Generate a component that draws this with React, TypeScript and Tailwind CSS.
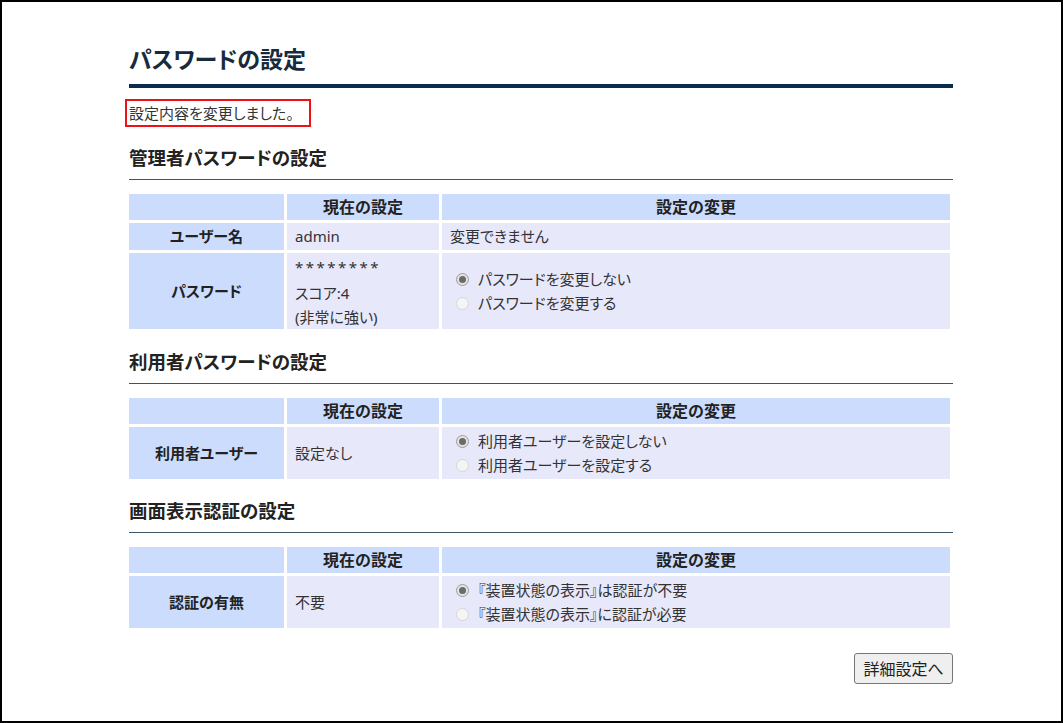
import React, { FC, ReactNode } from 'react'

const Radio: FC<{ checked?: boolean }> = ({ checked }) =>
  checked ? (
    <span className="flex h-[13px] w-[13px] shrink-0 items-center justify-center rounded-full border border-[#9c9c9c] bg-[#e4e4e4]">
      <span className="block h-[7px] w-[7px] rounded-full bg-[#6b6b6b]" />
    </span>
  ) : (
    <span className="block h-[13px] w-[13px] shrink-0 rounded-full border border-[#d6d6d6] bg-[#f5f5f5]" />
  )

const Option: FC<{ checked?: boolean; label: string }> = ({ checked, label }) => (
  <div className="flex h-[24px] items-center">
    <span className="ml-[6px] mr-[9px] flex">
      <Radio checked={checked} />
    </span>
    <span>{label}</span>
  </div>
)

const Section: FC<{ title: string; mt: string; children: ReactNode }> = ({ title, mt, children }) => (
  <section>
    <h2 className={`${mt} border-b border-[#3b5468] pb-[8px] text-[18.5px] font-bold leading-[26px] text-[#222]`}>
      {title}
    </h2>
    <div className="mt-[14px] grid w-[821px] grid-cols-[155px_152px_1fr] gap-x-[3px] gap-y-[3px] text-[15px] text-[#333]">
      <div className="bg-[#cbdcfd]" />
      <div className="bg-[#cbdcfd] text-center text-[16px] font-bold leading-[26px] text-[#222]">現在の設定</div>
      <div className="bg-[#cbdcfd] text-center text-[16px] font-bold leading-[26px] text-[#222]">設定の変更</div>
      {children}
    </div>
  </section>
)

const RowHead: FC<{ children: ReactNode }> = ({ children }) => (
  <div className="flex items-center justify-center bg-[#cbdcfd] text-[15px] font-bold text-[#222]">{children}</div>
)

const Cell: FC<{ children: ReactNode; className?: string }> = ({ children, className = '' }) => (
  <div className={`flex flex-col justify-center bg-[#e8e8fb] pl-[8px] ${className}`}>{children}</div>
)

const App: FC = () => {
  return (
    <div
      className="h-[723px] w-[1063px] overflow-hidden border-2 border-black bg-white pl-[127px] pt-[42px] [font-feature-settings:'palt']"
      style={{ fontFamily: '"Noto Sans", "Noto Sans CJK JP", sans-serif' }}
    >
      <div className="w-[824px]">
        <h1 className="text-[23px] font-bold leading-[30px] text-[#182a3d]">パスワードの設定</h1>
        <div className="mt-[10px] h-[4px] bg-[#0c2b4e]" />

        <div className="-ml-[4px] mt-[11px] h-[28px] w-[186px] border-2 border-[#f01018] pl-[2px] text-[15px] leading-[24px] text-[#333]">
          設定内容を変更しました。
        </div>

        <Section title="管理者パスワードの設定" mt="mt-[18px]">
          <RowHead>ユーザー名</RowHead>
          <Cell className="h-[27px]">admin</Cell>
          <Cell className="h-[27px]">変更できません</Cell>

          <RowHead>パスワード</RowHead>
          <Cell className="h-[76px] justify-start pt-[2px]">
            <div className="mb-[2px] leading-[24px] tracking-[2.5px]">********</div>
            <div className="leading-[24px]">スコア:4</div>
            <div className="leading-[24px]">(非常に強い)</div>
          </Cell>
          <Cell>
            <Option checked label="パスワードを変更しない" />
            <Option label="パスワードを変更する" />
          </Cell>
        </Section>

        <Section title="利用者パスワードの設定" mt="mt-[20px]">
          <RowHead>利用者ユーザー</RowHead>
          <Cell>設定なし</Cell>
          <Cell className="py-[2px]">
            <Option checked label="利用者ユーザーを設定しない" />
            <Option label="利用者ユーザーを設定する" />
          </Cell>
        </Section>

        <Section title="画面表示認証の設定" mt="mt-[19px]">
          <RowHead>認証の有無</RowHead>
          <Cell>不要</Cell>
          <Cell className="py-[2px]">
            <Option checked label="『装置状態の表示』は認証が不要" />
            <Option label="『装置状態の表示』に認証が必要" />
          </Cell>
        </Section>

        <div className="mt-[25px] flex justify-end">
          <button className="h-[31px] w-[99px] rounded-[3px] border border-[#767676] bg-[#efefef] text-[16px] text-[#222]">
            詳細設定へ
          </button>
        </div>
      </div>
    </div>
  )
}

export default App
